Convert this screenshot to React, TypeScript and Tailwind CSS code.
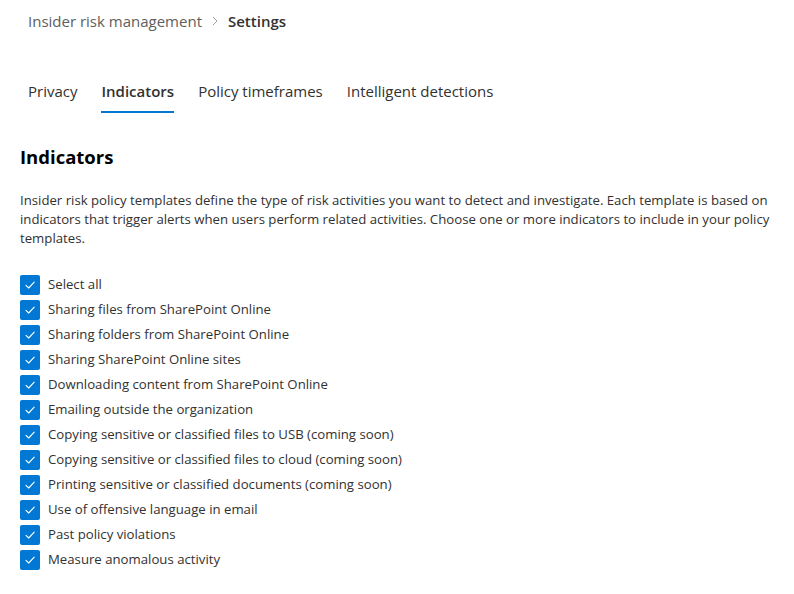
import React from "react";

const indicators = [
  "Sharing files from SharePoint Online",
  "Sharing folders from SharePoint Online",
  "Sharing SharePoint Online sites",
  "Downloading content from SharePoint Online",
  "Emailing outside the organization",
  "Copying sensitive or classified files to USB (coming soon)",
  "Copying sensitive or classified files to cloud (coming soon)",
  "Printing sensitive or classified documents (coming soon)",
  "Use of offensive language in email",
  "Past policy violations",
  "Measure anomalous activity",
];

const tabs = ["Privacy", "Indicators", "Policy timeframes", "Intelligent detections"];

function Check({ label }: { label: string }) {
  return (
    <label className="flex items-center h-[25px] gap-2 cursor-pointer">
      <span className="w-5 h-5 rounded-[2px] bg-[#0078d4] flex items-center justify-center">
        <svg width="12" height="12" viewBox="0 0 12 12" fill="none">
          <path d="M2 6.3 L4.7 9 L10.2 3.2" stroke="white" strokeWidth="1.1" strokeLinecap="round" strokeLinejoin="round" />
        </svg>
      </span>
      <span className="text-[13.2px] text-[#323130]">{label}</span>
    </label>
  );
}

export default function App() {
  return (
    <div className="w-[794px] h-[594px] bg-white overflow-hidden" style={{ fontFamily: '"Open Sans", "Noto Sans", sans-serif' }}>
      <div className="px-7 flex items-center text-[15px] h-[42px]">
        <span className="text-[#605e5c]">Insider risk management</span>
        <svg className="mx-[9px]" width="8" height="12" viewBox="0 0 8 12" fill="none">
          <path d="M2 2 L6 6 L2 10" stroke="#a19f9d" strokeWidth="1" />
        </svg>
        <span className="font-semibold text-[#323130]">Settings</span>
      </div>

      <div className="px-7 mt-[38px] flex gap-6 text-[15px]">
        {tabs.map((t) => (
          <div key={t} className="relative pb-[10px]">
            <span className={t === "Indicators" ? "font-semibold text-[#323130]" : "text-[#323130]"}>{t}</span>
            {t === "Indicators" ? <div className="absolute left-0 right-0 bottom-0 h-[2px] bg-[#0078d4]" /> : null}
          </div>
        ))}
      </div>

      <div className="px-5">
        <h1 className="mt-[30px] text-[18.5px] font-bold text-black">Indicators</h1>
        <p className="mt-[21px] text-[13.2px] leading-[19px] text-[#323130]">
          Insider risk policy templates define the type of risk activities you want to detect and investigate. Each template is based on indicators that trigger alerts when users perform related activities. Choose one or more indicators to include in your policy templates.
        </p>
        <div className="mt-[24px] flex flex-col">
          <Check label="Select all" />
          {indicators.map((i) => (
            <Check key={i} label={i} />
          ))}
        </div>
      </div>
    </div>
  );
}
